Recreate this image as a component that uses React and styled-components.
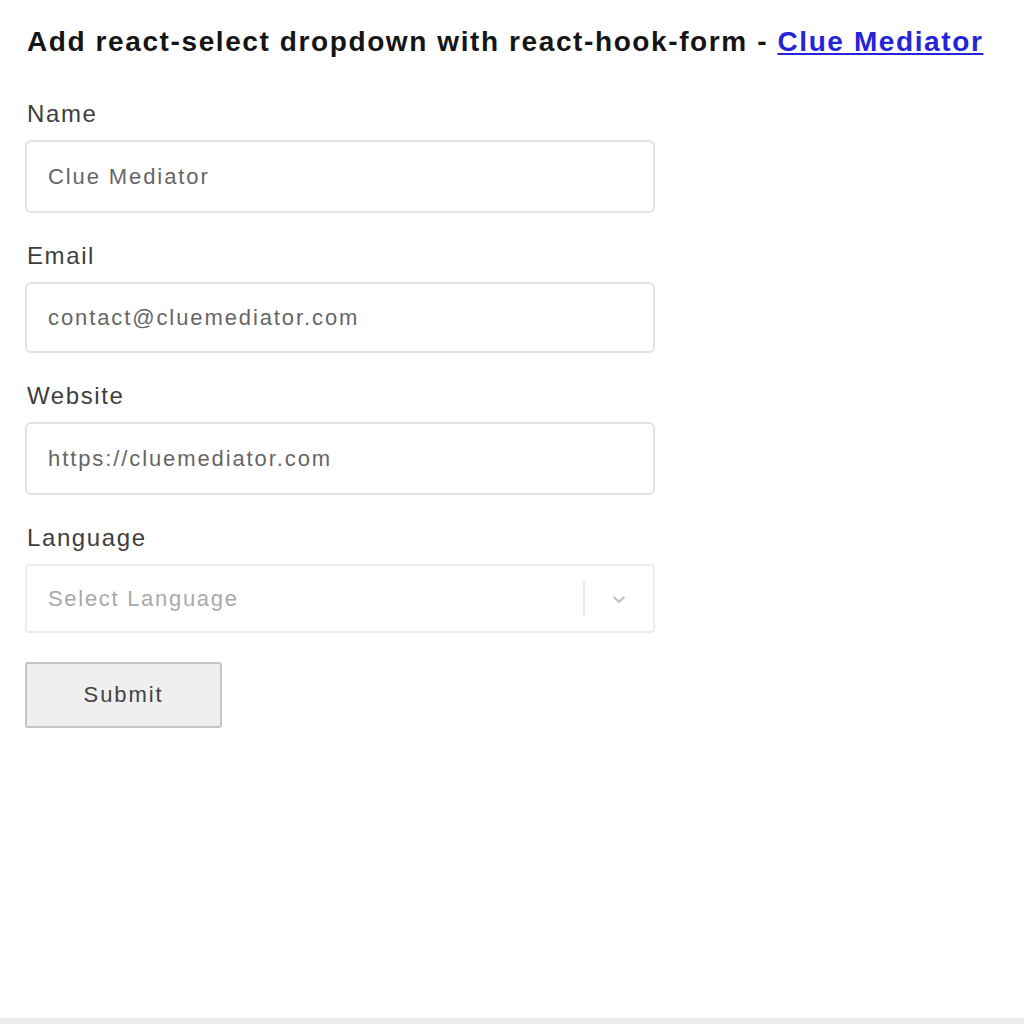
import React from "react";
import styled, { createGlobalStyle } from "styled-components";

const Global = createGlobalStyle`
  html, body { margin: 0; padding: 0; background: #fff; }
  body { font-family: "Liberation Sans", Arial, sans-serif; }
`;

const Page = styled.div`
  min-height: 100vh;
  display: flex;
  flex-direction: column;
`;

const Main = styled.main`
  flex: 1;
  padding: 26px 25px 0;
`;

const Footer = styled.div`
  height: 6px;
  background: #ebebeb;
`;

const Title = styled.h1`
  margin: 0 0 42px;
  font-size: 28px;
  line-height: 32px;
  font-weight: 700;
  letter-spacing: 1.6px;
  color: #151515;
  white-space: nowrap;
  padding-left: 2px;
`;

const Link = styled.a`
  color: #2424d8;
  text-decoration: underline;
`;

const Form = styled.form`
  width: 630px;
  display: flex;
  flex-direction: column;
`;

const Field = styled.div`
  display: flex;
  flex-direction: column;
  margin-bottom: 29px;
`;

const Label = styled.label`
  font-size: 24px;
  line-height: 28px;
  letter-spacing: 1.6px;
  color: #3e3e3e;
  margin-bottom: 12px;
  padding-left: 2px;
`;

const Input = styled.input`
  box-sizing: border-box;
  height: ${(p) => p.$h || 71}px;
  width: 100%;
  border: 2px solid #e2e2e2;
  border-radius: 6px;
  padding: 0 21px;
  font-family: "Liberation Sans", Arial, sans-serif;
  font-size: 22px;
  letter-spacing: 1.9px;
  color: #666;
  background: #fff;
  outline: none;
`;

const Select = styled.div`
  box-sizing: border-box;
  height: 69px;
  border: 2px solid #ececec;
  border-radius: 4px;
  display: flex;
  align-items: center;
  background: #fff;
`;

const Placeholder = styled.div`
  flex: 1;
  padding-left: 21px;
  font-size: 22px;
  letter-spacing: 1.7px;
  color: #aaa;
`;

const Separator = styled.span`
  width: 2px;
  align-self: stretch;
  margin: 16px 0;
  background: #e6e6e6;
`;

const Indicator = styled.div`
  width: 68px;
  display: flex;
  align-items: center;
  justify-content: center;
  color: #c4c4c4;
`;

const Button = styled.button`
  box-sizing: border-box;
  width: 197px;
  height: 66px;
  background: #efefef;
  border: 2px solid #c4c4c4;
  border-radius: 3px;
  font-family: "Liberation Sans", Arial, sans-serif;
  font-size: 22px;
  letter-spacing: 1.9px;
  color: #444;
  cursor: pointer;
`;

export default function App() {
  return (
    <Page>
      <Global />
      <Main>
        <Title>
          Add react-select dropdown with react-hook-form -{" "}
          <Link href="#">Clue Mediator</Link>
        </Title>
        <Form onSubmit={(e) => e.preventDefault()}>
          <Field>
            <Label>Name</Label>
            <Input $h={73} defaultValue="Clue Mediator" />
          </Field>
          <Field>
            <Label>Email</Label>
            <Input $h={71} defaultValue="contact@cluemediator.com" />
          </Field>
          <Field>
            <Label>Website</Label>
            <Input $h={73} defaultValue="https://cluemediator.com" />
          </Field>
          <Field>
            <Label>Language</Label>
            <Select>
              <Placeholder>Select Language</Placeholder>
              <Separator />
              <Indicator>
                <svg width="20" height="20" viewBox="0 0 20 20" fill="currentColor">
                  <path d="M4.516 7.548c0.436-0.446 1.043-0.481 1.576 0l3.908 3.747 3.908-3.747c0.533-0.481 1.141-0.446 1.574 0 0.436 0.445 0.408 1.197 0 1.615-0.406 0.418-4.695 4.502-4.695 4.502-0.217 0.223-0.502 0.335-0.787 0.335s-0.57-0.112-0.789-0.335c0 0-4.287-4.084-4.695-4.502s-0.436-1.170 0-1.615z" />
                </svg>
              </Indicator>
            </Select>
          </Field>
          <div>
            <Button type="submit">Submit</Button>
          </div>
        </Form>
      </Main>
      <Footer />
    </Page>
  );
}
